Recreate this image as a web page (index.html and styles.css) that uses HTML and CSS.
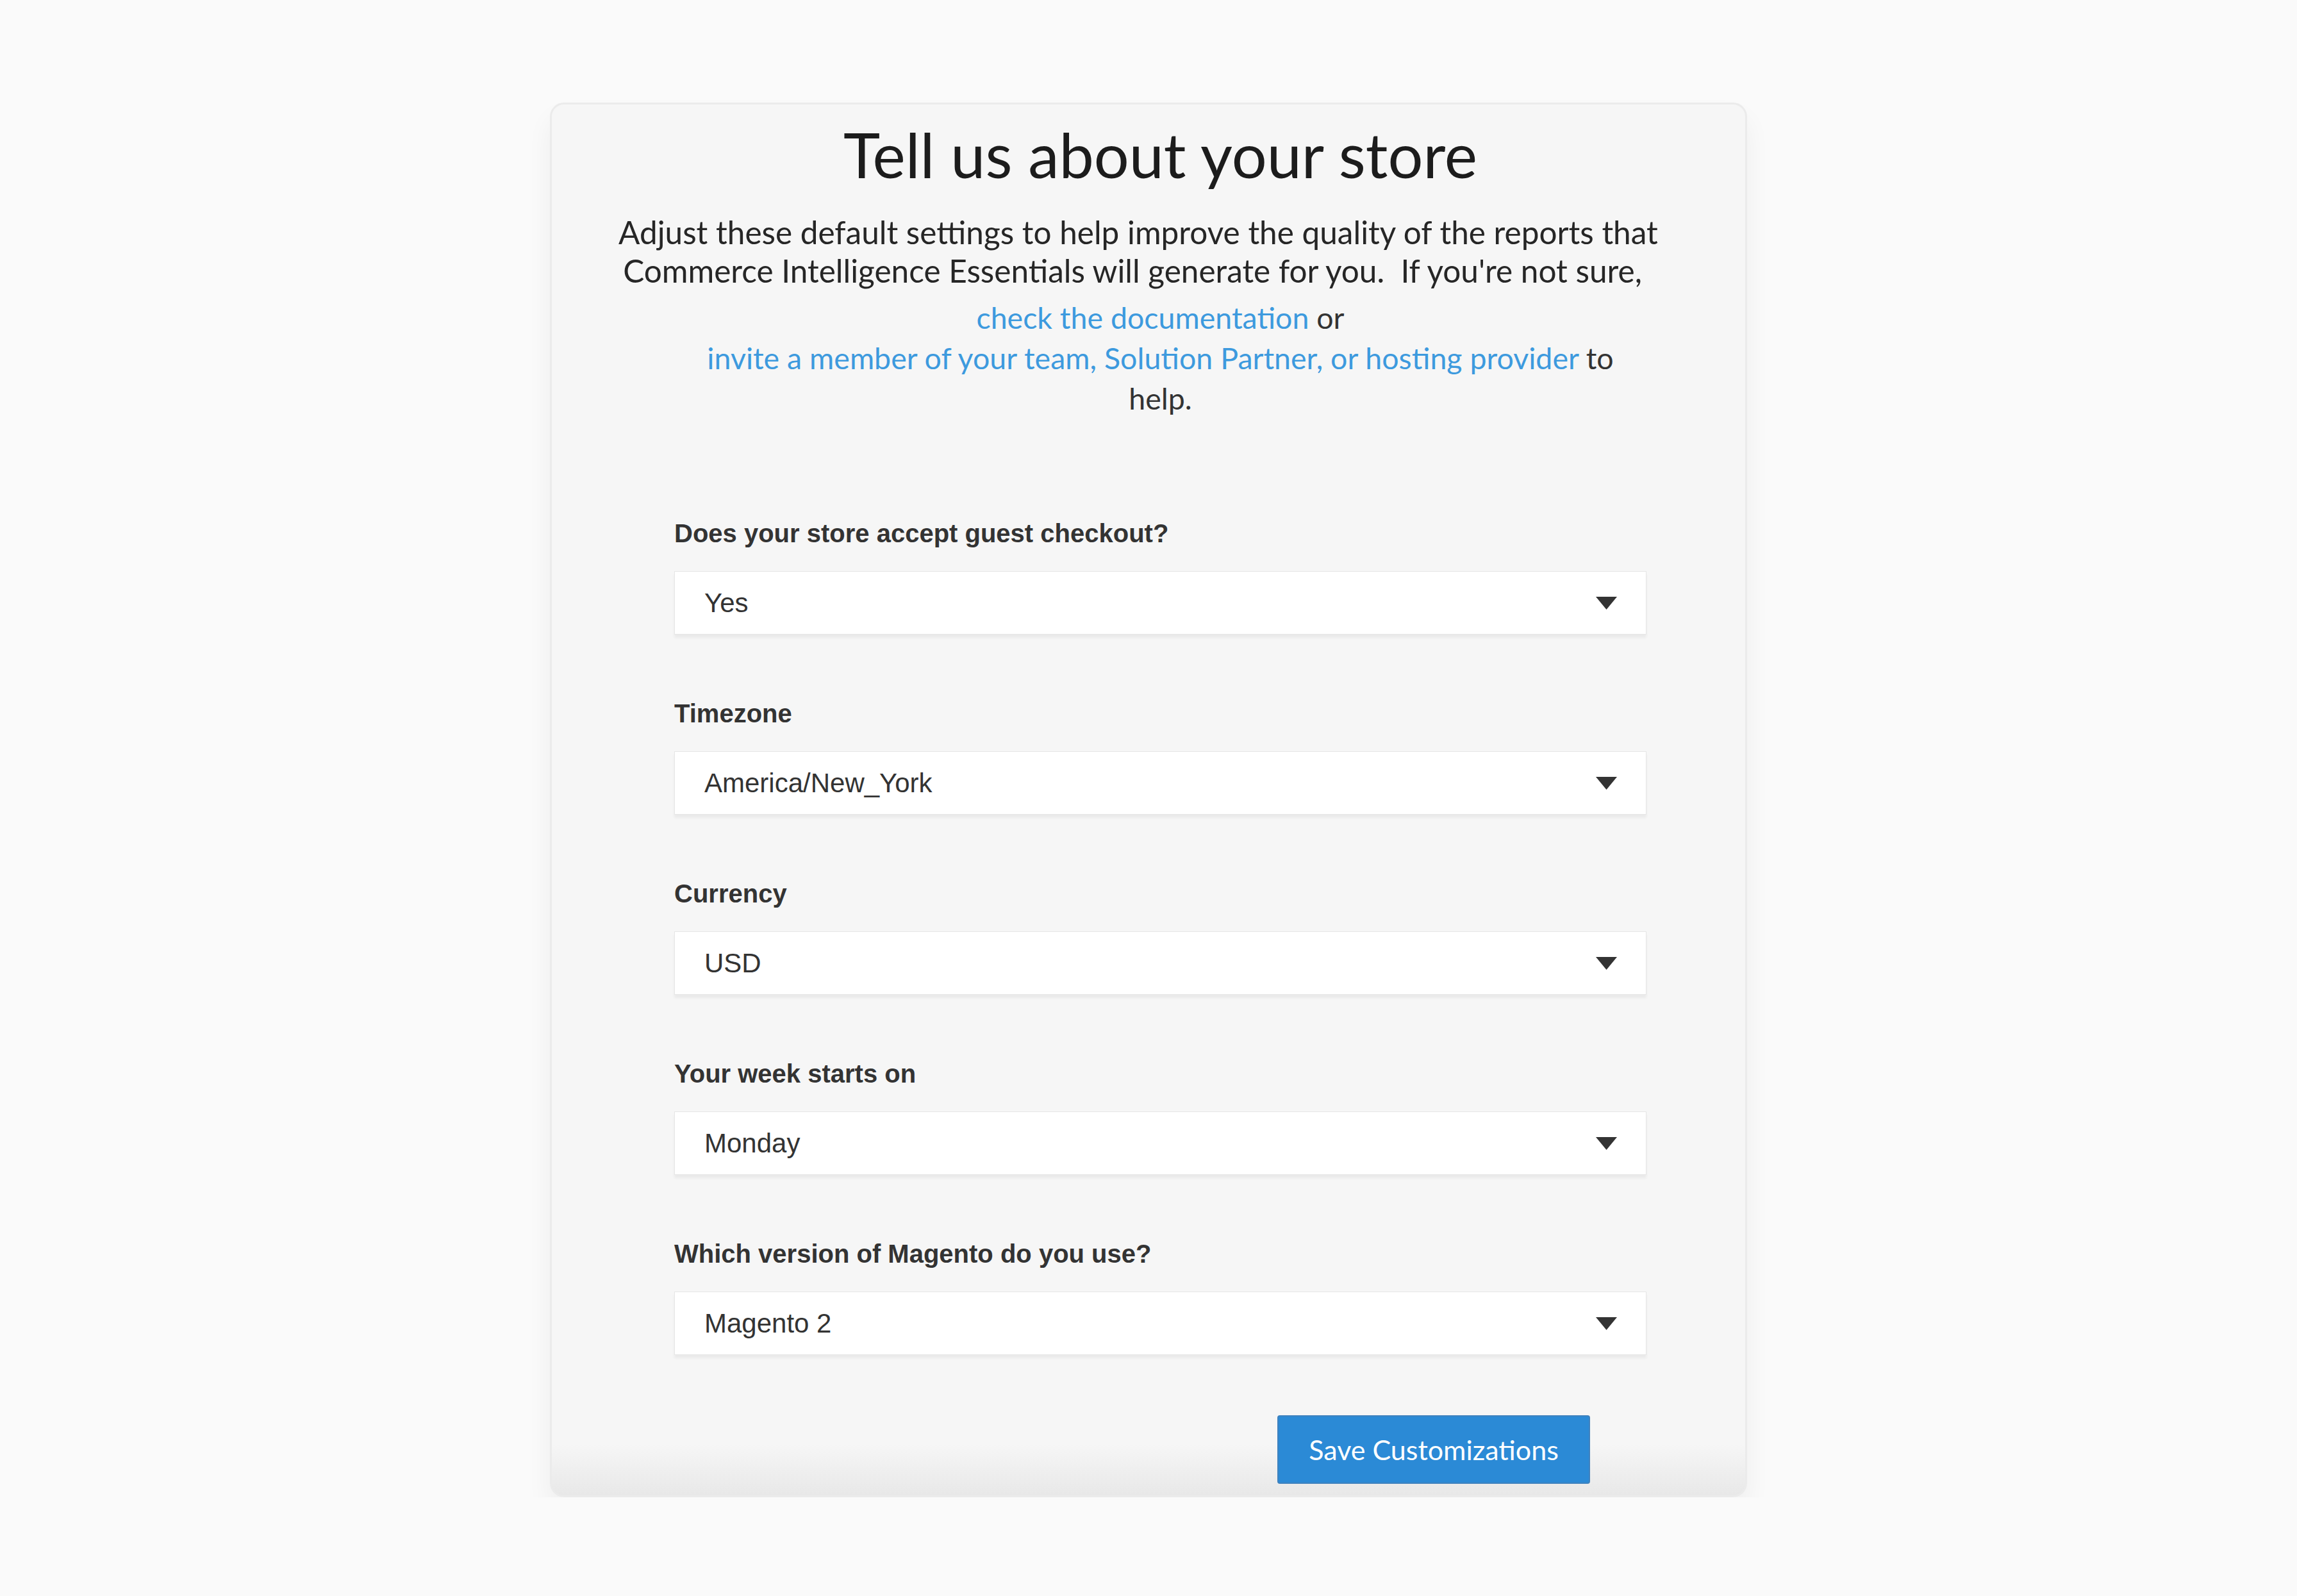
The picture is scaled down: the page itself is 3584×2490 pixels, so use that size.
FILE: index.html
```html
<!DOCTYPE html>
<html lang="en">
<head>
    <meta charset="UTF-8">
    <meta name="viewport" content="width=device-width, initial-scale=1.0">
    <title>Tell us about your store</title>
    <link rel="stylesheet" href="styles.css">
</head>
<body>

    <div class="card">
        <h1 class="title">Tell us about your store</h1>
        <p class="intro">Adjust these default settings to help improve the quality of the reports that<br>Commerce Intelligence Essentials will generate for you.&nbsp; If you're not sure,</p>
        <p class="help">
            <a href="#">check the documentation</a> or<br>
            <a href="#">invite a member of your team, Solution Partner, or hosting provider</a> to<br>
            help.
        </p>

        <form class="settings">
            <div class="field">
                <label>Does your store accept guest checkout?</label>
                <div class="select"><span>Yes</span><svg class="caret" viewBox="0 0 33 20"><path d="M0 0H33L16.5 20Z"/></svg></div>
            </div>
            <div class="field">
                <label>Timezone</label>
                <div class="select"><span>America/New_York</span><svg class="caret" viewBox="0 0 33 20"><path d="M0 0H33L16.5 20Z"/></svg></div>
            </div>
            <div class="field">
                <label>Currency</label>
                <div class="select"><span>USD</span><svg class="caret" viewBox="0 0 33 20"><path d="M0 0H33L16.5 20Z"/></svg></div>
            </div>
            <div class="field">
                <label>Your week starts on</label>
                <div class="select"><span>Monday</span><svg class="caret" viewBox="0 0 33 20"><path d="M0 0H33L16.5 20Z"/></svg></div>
            </div>
            <div class="field">
                <label>Which version of Magento do you use?</label>
                <div class="select"><span>Magento 2</span><svg class="caret" viewBox="0 0 33 20"><path d="M0 0H33L16.5 20Z"/></svg></div>
            </div>
            <div class="actions">
                <button type="submit">Save Customizations</button>
            </div>
        </form>
    </div>

</body>
</html>
```

FILE: styles.css
```css
body { margin: 0; padding-top: 160px; background: #fafafa; font-family: Lato, "Liberation Sans", sans-serif; color: #2b2b2b; }

.card { box-sizing: border-box; width: 1868px; margin: 0 auto; padding: 23px 154px 18px 191px; border: 3px solid #ebebeb; border-radius: 22px; background: linear-gradient(to bottom, #f6f6f6 0, #f6f6f6 calc(100% - 80px), #e8e8e8 100%); box-shadow: 0 24px 40px rgba(0,0,0,0.05); }

.title { margin: 0; font-size: 97px; font-weight: 400; line-height: 110px; text-align: center; color: #1c1c1c; }

.intro { margin: 36px 0 0 -87px; font-size: 49.5px; line-height: 60px; text-align: center; white-space: nowrap; color: #262626; }

.help { margin: 12px 0 0; font-size: 46.5px; line-height: 63px; text-align: center; color: #333; }
.help a { color: #3d9ade; text-decoration: none; }

.settings { margin-top: 157px; }
.field { margin-bottom: 101px; }
.field label { display: block; margin-bottom: 37px; font-family: "Liberation Sans", Arial, sans-serif; font-size: 40px; font-weight: 700; line-height: 44px; color: #333; }

.select { box-sizing: border-box; height: 99px; display: flex; align-items: center; justify-content: space-between; padding: 0 45px 0 46px; background: #fff; border: 1px solid #e6e6e6; box-shadow: 0 5px 4px rgba(0,0,0,0.05); font-family: "Liberation Sans", Arial, sans-serif; font-size: 42px; color: #333; }
.caret { width: 33px; height: 20px; fill: #333; }

.actions { display: flex; justify-content: flex-end; padding-right: 88px; margin-top: -7px; }
.actions button { width: 488px; height: 107px; border: 2px solid #3f82be; border-radius: 4px; background: #2b8ad6; color: #fff; font-family: Lato, sans-serif; font-size: 43px; cursor: pointer; }
```
